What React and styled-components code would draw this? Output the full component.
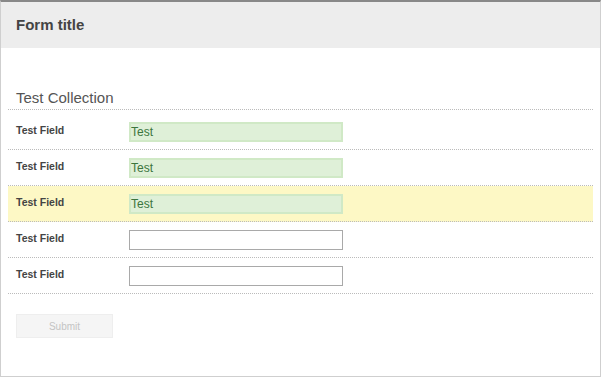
import React from "react";
import styled, { createGlobalStyle } from "styled-components";

const GlobalStyle = createGlobalStyle`
  body {
    margin: 0;
    background: #fff;
    font-family: "Liberation Sans", Arial, sans-serif;
  }
`;

const Card = styled.div`
  width: 601px;
  height: 377px;
  box-sizing: border-box;
  border: 1px solid #cfcfcf;
  border-top: 2px solid #888;
  background: #fff;
`;

const Header = styled.div`
  height: 46px;
  box-sizing: border-box;
  background: #ededed;
  display: flex;
  align-items: center;
  padding: 0 15px 2px;
`;

const Title = styled.h1`
  margin: 0;
  font-size: 15px;
  font-weight: bold;
  color: #444;
`;

const Body = styled.div`
  padding: 40px 7px 0 7px;
`;

const CollectionTitle = styled.h2`
  margin: 0;
  padding: 1px 8px 2px;
  font-size: 15px;
  font-weight: normal;
  color: #555;
  line-height: 18px;
  border-bottom: 1px dotted #bbb;
`;

const Row = styled.div`
  display: flex;
  align-items: flex-start;
  height: 35px;
  padding-top: ${({ $first }) => ($first ? "4px" : "0")};
  border-bottom: 1px dotted #bbb;
  background: ${({ $highlight }) => ($highlight ? "#fdf8c5" : "transparent")};
`;

const Label = styled.label`
  width: 113px;
  padding: 10px 0 0 8px;
  font-size: 10.5px;
  font-weight: bold;
  color: #444;
`;

const Input = styled.input`
  margin-top: 8px;
  width: 214px;
  height: 20px;
  box-sizing: border-box;
  padding: 0;
  font-family: "Liberation Sans", Arial, sans-serif;
  font-size: 12px;
  outline: none;
  color: ${({ $filled }) => ($filled ? "#3c763d" : "#333")};
  background: ${({ $filled }) => ($filled ? "#dff0d8" : "#fff")};
  border: ${({ $filled }) => ($filled ? "2px solid #d0e9c6" : "1px solid #a9a9a9")};
`;

const Actions = styled.div`
  padding: 20px 8px 0;
`;

const SubmitButton = styled.button`
  width: 97px;
  height: 24px;
  background: #f5f5f5;
  border: 1px solid #eee;
  color: #c4c4c4;
  font-family: "Liberation Sans", Arial, sans-serif;
  font-size: 10px;
`;

const fields = [
  { value: "Test" },
  { value: "Test" },
  { value: "Test", highlight: true },
  { value: "" },
  { value: "" },
];

export default function App() {
  return (
    <>
      <GlobalStyle />
      <Card>
        <Header>
          <Title>Form title</Title>
        </Header>
        <Body>
          <CollectionTitle>Test Collection</CollectionTitle>
          {fields.map((f, i) => (
            <Row key={i} $first={i === 0} $highlight={f.highlight}>
              <Label>Test Field</Label>
              <Input $filled={!!f.value} defaultValue={f.value} readOnly />
            </Row>
          ))}
          <Actions>
            <SubmitButton disabled>Submit</SubmitButton>
          </Actions>
        </Body>
      </Card>
    </>
  );
}
